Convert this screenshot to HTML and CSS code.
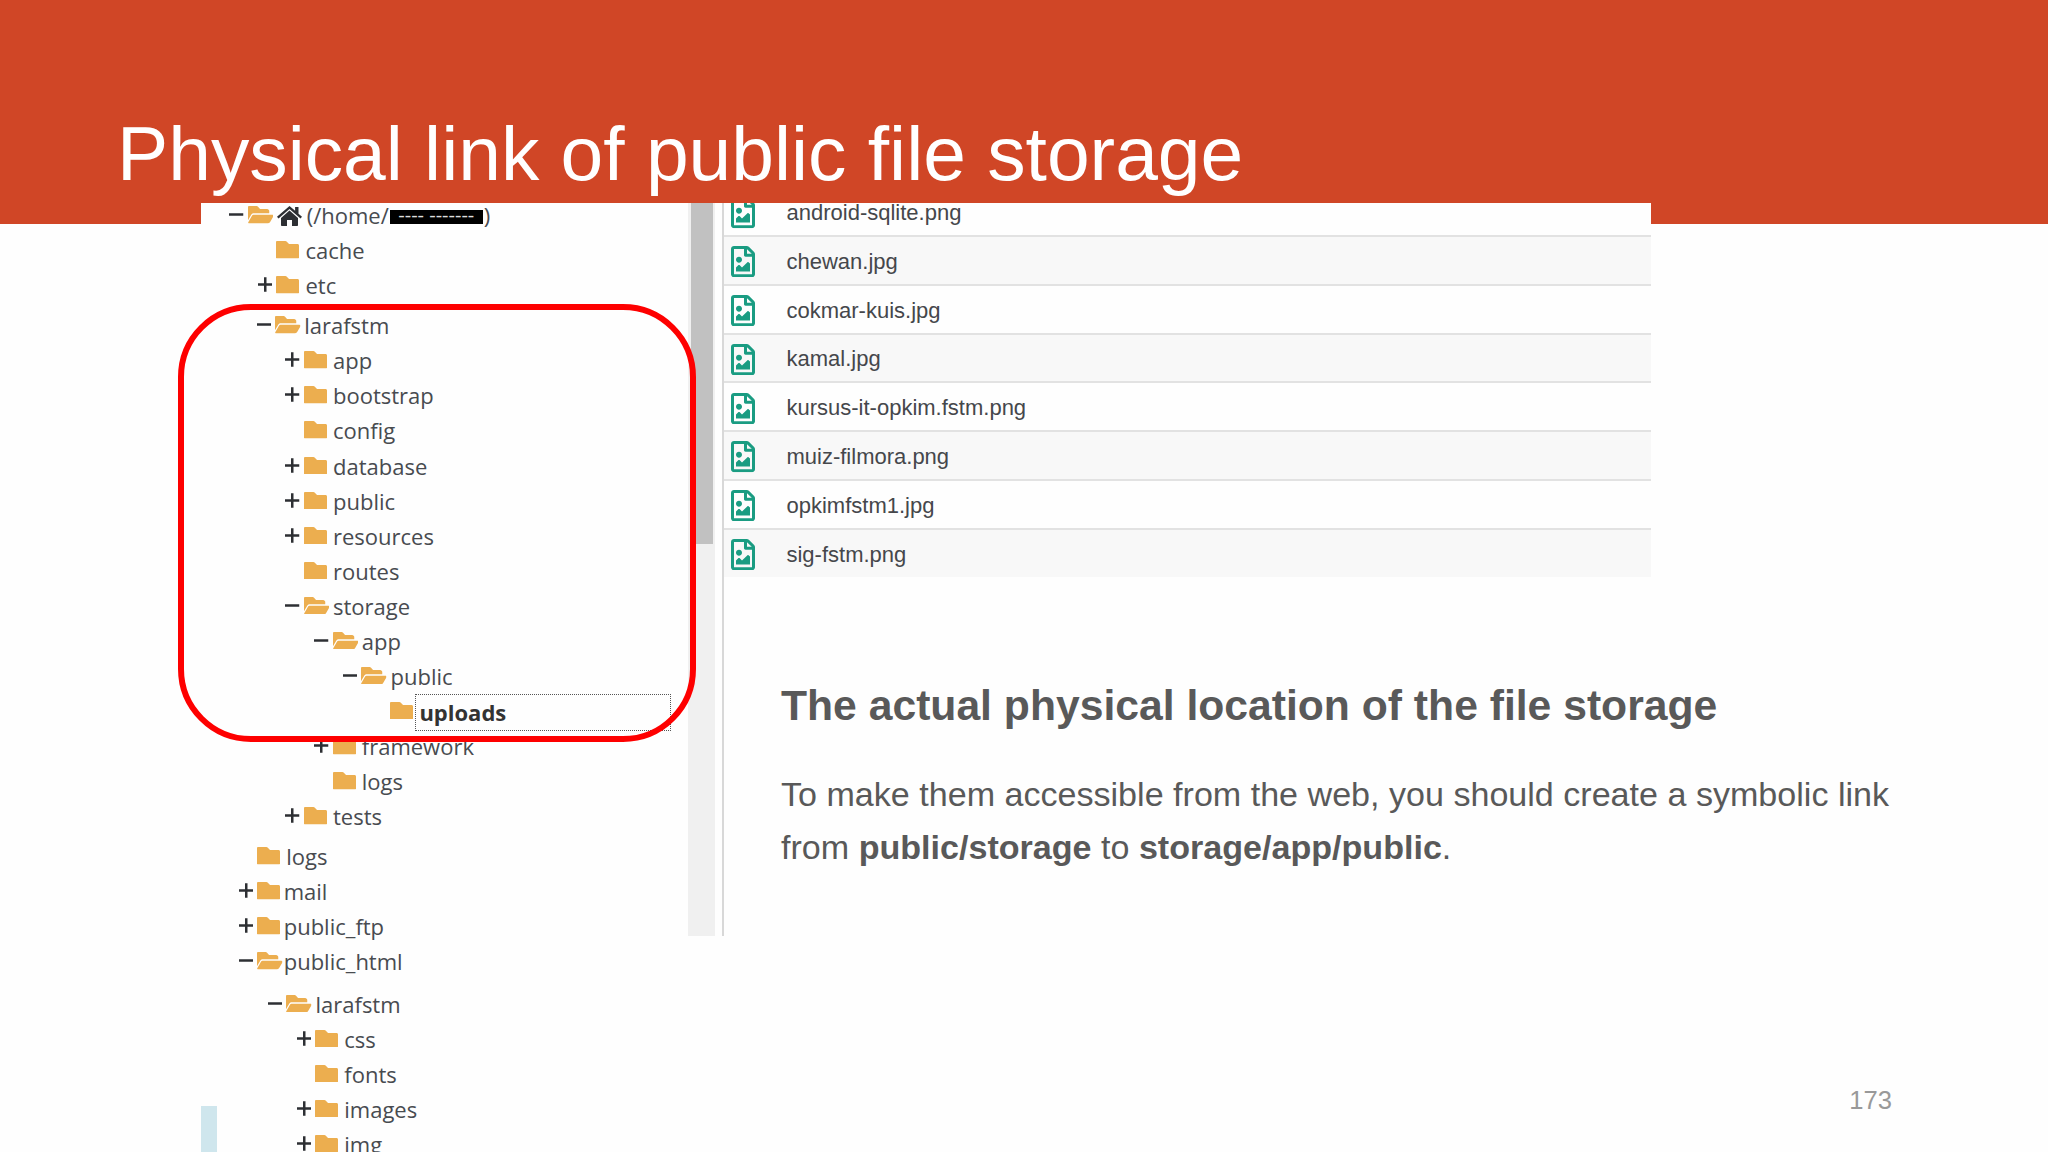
FILE: index.html
```html
<!DOCTYPE html>
<html lang="en">

<head>
    <meta charset="UTF-8">
    <meta name="viewport" content="width=device-width, initial-scale=1.0">
    <link rel="stylesheet" href="styles.css">
    <title>Physical link of public file storage</title>
</head>

<body>
    <!-- icons -->
    <svg class="sprite">
        <symbol id="folder" viewBox="0 64 512 384" preserveAspectRatio="none">
            <path d="M480 128H290l-54-52c-8-8-16-12-26-12H24C10 64 0 74 0 88v336c0 14 10 24 24 24h464c14 0 24-10 24-24V160c0-18-14-32-32-32z" />
        </symbol>
        <symbol id="open" viewBox="0 64 576 384" preserveAspectRatio="none">
            <path d="M572.7 292.1L500.3 416.2A64 64 0 0 1 445 448H20c-14 0-20-14-14-26l87-150A40 40 0 0 1 130 256h422c18.5 0 30 20 20.7 36.1zM130 224h350v-48c0-26.500-21.500-48-48-48H272l-50-52c-8-8-16-12-26-12H24C10 64 0 74 0 88v290l69.100-118.400C82 236 104 224 130 224z" />
        </symbol>
        <symbol id="plus" viewBox="0 0 15 15">
            <path d="M6.200 0h2.600v6.200H15v2.600H8.800V15H6.200V8.800H0V6.200h6.200z" />
        </symbol>
        <symbol id="minus" viewBox="0 0 15 15">
            <path d="M0 6.200h15v2.600H0z" />
        </symbol>
        <symbol id="home" viewBox="0 0 25 20">
            <path d="M12.500 0L0 10.800l1.500 1.700 11-9.500 11 9.500 1.500-1.700-3.500-3V1h-3.400v3.800z" />
            <path d="M12.500 4.600L4 12v7.200c0 .5.300.8.800.8H10v-6h5v6h5.200c.5 0 .8-.3.800-.8V12z" />
        </symbol>
        <symbol id="image" viewBox="0 0 384 512" preserveAspectRatio="none">
            <path d="M369.900 97.900L286 14C277 5 264.800 0 252.100 0H48C21.500 0 0 21.500 0 48v416c0 26.500 21.500 48 48 48h288c26.500 0 48-21.500 48-48V131.900c0-12.700-5.100-25-14.100-34zM332.100 128H256V51.900l76.100 76.100zM48 464V48h160v104c0 13.300 10.700 24 24 24h104v288H48zm32-48h224V288l-23.500-23.500c-4.700-4.700-12.300-4.700-17 0L176 352l-39.500-39.500c-4.700-4.700-12.300-4.700-17 0L80 352v64zm48-240c-26.500 0-48 21.500-48 48s21.500 48 48 48 48-21.500 48-48-21.500-48-48-48z" />
        </symbol>
    </svg>

    <div class="slide">
        <div class="header">
            <h1>Physical link of public file storage</h1>
        </div>

        <div class="main">
            <div class="tree">
                <div class="group home">
                    <div class="row"><svg class="toggle"><use href="#minus" /></svg><svg class="open"><use href="#open" /></svg><svg class="house"><use href="#home" /></svg><span>(/home/</span><span class="hidden">---- -------</span><span>)</span></div>
                    <div class="row l1"><i class="toggle"></i><svg class="folder"><use href="#folder" /></svg><span>cache</span></div>
                    <div class="row l1"><svg class="toggle"><use href="#plus" /></svg><svg class="folder"><use href="#folder" /></svg><span>etc</span></div>
                </div>

                <div class="group project">
                    <div class="row"><svg class="toggle"><use href="#minus" /></svg><svg class="open"><use href="#open" /></svg><span>larafstm</span></div>
                    <div class="row l1"><svg class="toggle"><use href="#plus" /></svg><svg class="folder"><use href="#folder" /></svg><span>app</span></div>
                    <div class="row l1"><svg class="toggle"><use href="#plus" /></svg><svg class="folder"><use href="#folder" /></svg><span>bootstrap</span></div>
                    <div class="row l1"><i class="toggle"></i><svg class="folder"><use href="#folder" /></svg><span>config</span></div>
                    <div class="row l1"><svg class="toggle"><use href="#plus" /></svg><svg class="folder"><use href="#folder" /></svg><span>database</span></div>
                    <div class="row l1"><svg class="toggle"><use href="#plus" /></svg><svg class="folder"><use href="#folder" /></svg><span>public</span></div>
                    <div class="row l1"><svg class="toggle"><use href="#plus" /></svg><svg class="folder"><use href="#folder" /></svg><span>resources</span></div>
                    <div class="row l1"><i class="toggle"></i><svg class="folder"><use href="#folder" /></svg><span>routes</span></div>
                    <div class="row l1"><svg class="toggle"><use href="#minus" /></svg><svg class="open"><use href="#open" /></svg><span>storage</span></div>
                    <div class="row l2"><svg class="toggle"><use href="#minus" /></svg><svg class="open"><use href="#open" /></svg><span>app</span></div>
                    <div class="row l3"><svg class="toggle"><use href="#minus" /></svg><svg class="open"><use href="#open" /></svg><span>public</span></div>
                    <div class="row l4"><i class="toggle"></i><svg class="folder"><use href="#folder" /></svg><span class="selected">uploads</span></div>
                    <div class="row l2"><svg class="toggle"><use href="#plus" /></svg><svg class="folder"><use href="#folder" /></svg><span>framework</span></div>
                    <div class="row l2"><i class="toggle"></i><svg class="folder"><use href="#folder" /></svg><span>logs</span></div>
                    <div class="row l1"><svg class="toggle"><use href="#plus" /></svg><svg class="folder"><use href="#folder" /></svg><span>tests</span></div>
                </div>

                <div class="group root">
                    <div class="row logs"><i class="toggle"></i><svg class="folder"><use href="#folder" /></svg><span>logs</span></div>
                    <div class="row"><svg class="toggle"><use href="#plus" /></svg><svg class="folder"><use href="#folder" /></svg><span>mail</span></div>
                    <div class="row"><svg class="toggle"><use href="#plus" /></svg><svg class="folder"><use href="#folder" /></svg><span>public_ftp</span></div>
                    <div class="row"><svg class="toggle"><use href="#minus" /></svg><svg class="open"><use href="#open" /></svg><span>public_html</span></div>
                </div>

                <div class="group html">
                    <div class="row"><svg class="toggle"><use href="#minus" /></svg><svg class="open"><use href="#open" /></svg><span>larafstm</span></div>
                    <div class="row l1"><svg class="toggle"><use href="#plus" /></svg><svg class="folder"><use href="#folder" /></svg><span>css</span></div>
                    <div class="row l1"><i class="toggle"></i><svg class="folder"><use href="#folder" /></svg><span>fonts</span></div>
                    <div class="row l1"><svg class="toggle"><use href="#plus" /></svg><svg class="folder"><use href="#folder" /></svg><span>images</span></div>
                    <div class="row l1"><svg class="toggle"><use href="#plus" /></svg><svg class="folder"><use href="#folder" /></svg><span>img</span></div>
                </div>
            </div>

            <div class="scrollbar">
                <div class="thumb"></div>
            </div>

            <div class="right">
                <div class="files">
                    <div class="file"><svg><use href="#image" /></svg>android-sqlite.png</div>
                    <div class="file"><svg><use href="#image" /></svg>chewan.jpg</div>
                    <div class="file"><svg><use href="#image" /></svg>cokmar-kuis.jpg</div>
                    <div class="file"><svg><use href="#image" /></svg>kamal.jpg</div>
                    <div class="file"><svg><use href="#image" /></svg>kursus-it-opkim.fstm.png</div>
                    <div class="file"><svg><use href="#image" /></svg>muiz-filmora.png</div>
                    <div class="file"><svg><use href="#image" /></svg>opkimfstm1.jpg</div>
                    <div class="file"><svg><use href="#image" /></svg>sig-fstm.png</div>
                </div>
                <div class="text">
                    <h2>The actual physical location of the file storage</h2>
                    <p>To make them accessible from the web, you should create a symbolic link<br>
                        from <b>public/storage</b> to <b>storage/app/public</b>.</p>
                </div>
            </div>
        </div>

        <!-- on top of the tree -->
        <div class="highlight"></div>
        <div class="bluebar"></div>
        <div class="page">173</div>
    </div>
</body>

</html>
```
FILE: styles.css
```css
* {
    box-sizing: border-box;
}

body {
    margin: 0;
    background-color: #fefefe;
    font-family: "Liberation Sans", Arial, sans-serif;
}

.sprite {
    display: none;
}

.slide {
    position: relative;
    width: 2048px;
    height: 1152px;
    overflow: hidden;
}

.header {
    height: 224px;
    padding: 110px 0 0 117px;
    background-color: #d04626;
}

h1 {
    margin: 0;
    font-size: 76.750px;
    font-weight: normal;
    line-height: 88px;
    color: #fff;
}

.main {
    display: flex;
    align-items: flex-start;
    margin: -21px 0 0 201px;
}

/* folder tree */
.tree {
    width: 487px;
    height: 949px;
    background-color: #fefefe;
    font-family: "Open Sans", "Noto Sans", sans-serif;
    font-size: 22px;
    color: #484b50;
}

.group {
    --step: 28.8px;
}

.home {
    margin-top: -5px;
    padding-left: 28px;
}

.project {
    padding: 5.1px 0 0 55.500px;
}

.root {
    padding: 5px 0 0 37.700px;
}

.html {
    padding: 7.300px 0 0 66.800px;
}

.row {
    display: flex;
    align-items: flex-start;
    height: 35.070px;
    line-height: 35px;
    white-space: nowrap;
}

.l1 {
    padding-left: var(--step);
}

.l2 {
    padding-left: calc(var(--step) * 2);
}

.l3 {
    padding-left: calc(var(--step) * 3);
}

.l4 {
    padding-left: calc(var(--step) * 4);
}

.toggle {
    width: 14.500px;
    height: 15px;
    margin: 9px 4px 0 0;
    fill: #2d2f33;
}

.folder {
    width: 23px;
    height: 17.500px;
    margin: 8px 6.200px 0 0;
    fill: #ecae4f;
}

.open {
    width: 25.500px;
    height: 17.500px;
    margin: 8px 3.700px 0 0;
    fill: #ecae4f;
}

.root .folder {
    margin-right: 3.500px;
}

.root .logs .folder {
    margin-right: 6px;
}

.root .open {
    margin-right: 1px;
}

.house {
    width: 25px;
    height: 20px;
    margin: 8px 5px 0 0;
    fill: #2d2f33;
}

.hidden {
    width: 93px;
    height: 14px;
    margin: 12px 1px 0 1px;
    background-color: #000;
    color: #ddd;
    font-size: 20px;
    line-height: 10px;
    text-align: center;
}

.selected {
    width: 256px;
    height: 37px;
    margin: 0 0 0 -4px;
    padding-left: 3px;
    border: 1px dotted #555;
    font-weight: bold;
    color: #333;
}

.scrollbar {
    width: 27px;
    height: 733px;
    padding: 0 2px 0 3px;
    background-color: #f0f0f0;
}

.thumb {
    height: 340.500px;
    background-color: #c1c1c1;
}

/* list of files */
.right {
    width: 1187px;
    height: 733px;
    padding-left: 7px;
    background: linear-gradient(#fefefe, #fefefe) 0 0 / 7px 100% no-repeat;
}

.files {
    display: flex;
    flex-direction: column;
    justify-content: flex-end;
    width: 929px;
    height: 373.500px;
    overflow: hidden;
    border-left: 2px solid #d8d8d8;
    background-color: #fefefe;
}

.file {
    display: flex;
    flex: none;
    align-items: center;
    height: 48.800px;
    padding: 3px 0 0 6.700px;
    border-top: 2px solid #e2e2e2;
    font-size: 22px;
    color: #45474b;
}

.file:nth-child(even) {
    background-color: #f8f8f8;
}

.file svg {
    width: 24px;
    height: 31.300px;
    margin-right: 31.800px;
    fill: #1a9c82;
}

.text {
    height: 359.500px;
    padding: 103px 0 0 57px;
    border-left: 2px solid #d8d8d8;
    color: #595959;
}

h2 {
    margin: 0 0 38px;
    font-size: 42.670px;
    line-height: 50px;
}

p {
    margin: 0;
    font-size: 34.100px;
    line-height: 53px;
    white-space: nowrap;
}

.highlight {
    position: absolute;
    left: 178px;
    top: 304px;
    width: 518px;
    height: 438px;
    border: 6.400px solid #fe0000;
    border-radius: 73px;
}

.bluebar {
    position: absolute;
    left: 201px;
    bottom: 0;
    width: 16px;
    height: 46px;
    background-color: #cfe6ed;
}

.page {
    position: absolute;
    right: 156px;
    bottom: 37px;
    font-size: 25.600px;
    line-height: 30px;
    color: #999;
}
```
